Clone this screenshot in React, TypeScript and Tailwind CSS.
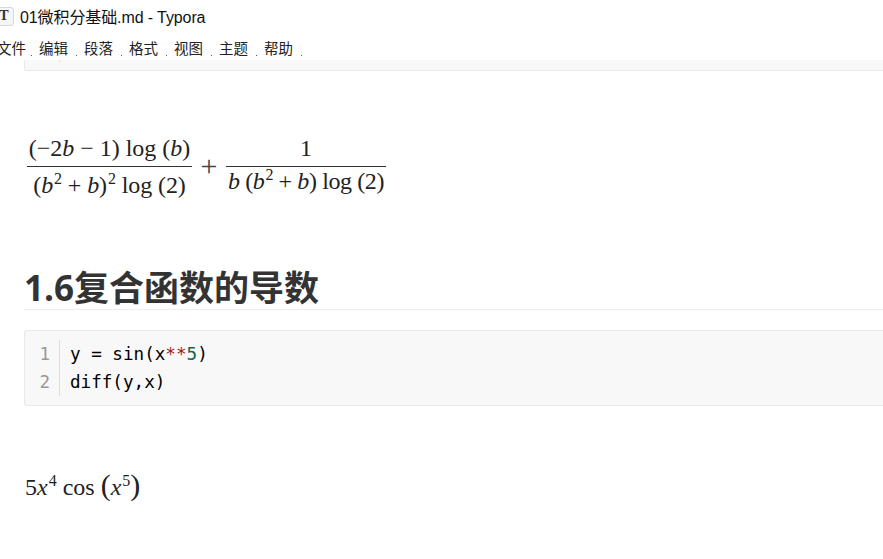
const serif = "font-['Liberation_Serif',serif]";

function V({ children }: { children: React.ReactNode }) {
  return <i className="italic">{children}</i>;
}
function Sup({ children }: { children: React.ReactNode }) {
  return <sup className="text-[16px] leading-none relative -top-[9px] align-baseline ml-[1px]">{children}</sup>;
}

const menu = ["编辑", "段落", "格式", "视图", "主题", "帮助"];

function Dot() {
  return <span className="w-[1px] h-[1px] bg-[#555] mt-[13px] ml-[7px] mr-[7px]" />;
}

export default function App() {
  return (
    <div className="w-[883px] h-[559px] overflow-hidden bg-white font-['Open_Sans','Noto_Sans_CJK_SC',sans-serif] text-[#333]">
      {/* Title bar */}
      <div className="h-[35px] flex items-center">
        <div className="w-[20px] h-[19px] ml-[-6px] mt-[-3px] rounded-[3px] border border-[#d8d8d8] bg-[#f6f6f6] flex items-center justify-center text-[14px] font-bold text-[#333] font-['Liberation_Serif',serif] leading-none">
          T
        </div>
        <span className="ml-[6px] text-[16px] tracking-[-0.1px] text-[#111] whitespace-nowrap font-['Liberation_Sans','Noto_Sans_CJK_SC',sans-serif]">
          01微积分基础.md - Typora
        </span>
      </div>
      {/* Menu bar */}
      <div className="h-[25px] pt-[2px] flex items-center ml-[-3px] text-[14.5px] text-[#222] whitespace-nowrap font-['Noto_Sans_CJK_SC',sans-serif]">
        <span className="w-[27px] leading-none">文件</span>
        <Dot />
        {menu.map((m) => (
          <div key={m} className="flex items-center">
            <span className="w-[30px] leading-none">{m}</span>
            <Dot />
          </div>
        ))}
      </div>
      {/* Previous code block remnant */}
      <div className="h-[11px] ml-[24px] bg-[#f8f8f8] border-b border-l border-[#e7eaed] rounded-bl-[3px]">
        <div className="ml-[34px] w-[1px] h-[2px] bg-[#dddddd]" />
      </div>

      {/* Fraction formula */}
      <div className={`mt-[64px] ml-[27px] h-[70px] flex items-center text-[24px] leading-none text-[#222] ${serif}`}>
        <div className="flex flex-col items-center w-[165px]">
          <div className="h-[30px] pb-[6px] flex items-end">
            <span className="whitespace-pre">(−2<V>b</V> − 1) log (<V>b</V>)</span>
          </div>
          <div className="w-full h-[1px] bg-[#333]" />
          <div className="h-[38px] pb-[8px] flex items-end">
            <span className="whitespace-pre tracking-[-0.1px]">(<V>b</V><Sup>2</Sup> + <V>b</V>)<Sup>2</Sup> log (2)</span>
          </div>
        </div>
        <span className="w-[34px] text-center text-[30px] mb-[8px] text-[#444]">+</span>
        <div className="flex flex-col items-center w-[160px]">
          <div className="h-[30px] pb-[6px] flex items-end">1</div>
          <div className="w-full h-[1px] bg-[#333]" />
          <div className="h-[38px] pt-[2px] flex items-start">
            <span className="whitespace-pre tracking-[-0.4px]"><V>b</V> (<V>b</V><Sup>2</Sup> + <V>b</V>) log (2)</span>
          </div>
        </div>
      </div>

      {/* Heading */}
      <div className="mt-[56px] ml-[24px] h-[49px] pt-[4px] border-b border-[#eeeeee] flex items-center text-[35px] leading-none font-bold text-[#333] whitespace-nowrap font-['Open_Sans','Noto_Sans_CJK_SC',sans-serif]">
        1.6复合函数的导数
      </div>

      {/* Code block */}
      <div className="mt-[20px] ml-[24px] h-[76px] bg-[#f8f8f8] border border-r-0 border-[#e7eaed] rounded-l-[3px] flex items-center font-['DejaVu_Sans_Mono',monospace] text-[17.6px] leading-[28px] text-black">
        <div className="w-[35px] h-[56px] border-r border-[#dddddd] text-[#999] text-right pr-[9px]">
          <div>1</div>
          <div>2</div>
        </div>
        <div className="pl-[10px]">
          <div className="whitespace-pre">
            y = sin(x<span className="text-[#981a1a]">**</span>
            <span className="text-[#116644]">5</span>)
          </div>
          <div>diff(y,x)</div>
        </div>
      </div>

      {/* Result formula */}
      <div className={`mt-[63px] ml-[25px] h-[32px] flex items-center text-[24px] leading-none text-[#222] ${serif}`}>
        <span className="whitespace-pre">5<V>x</V><Sup>4</Sup> cos <span className="text-[30px] font-light">(</span><V>x</V><Sup>5</Sup><span className="text-[30px] font-light">)</span></span>
      </div>
    </div>
  );
}
